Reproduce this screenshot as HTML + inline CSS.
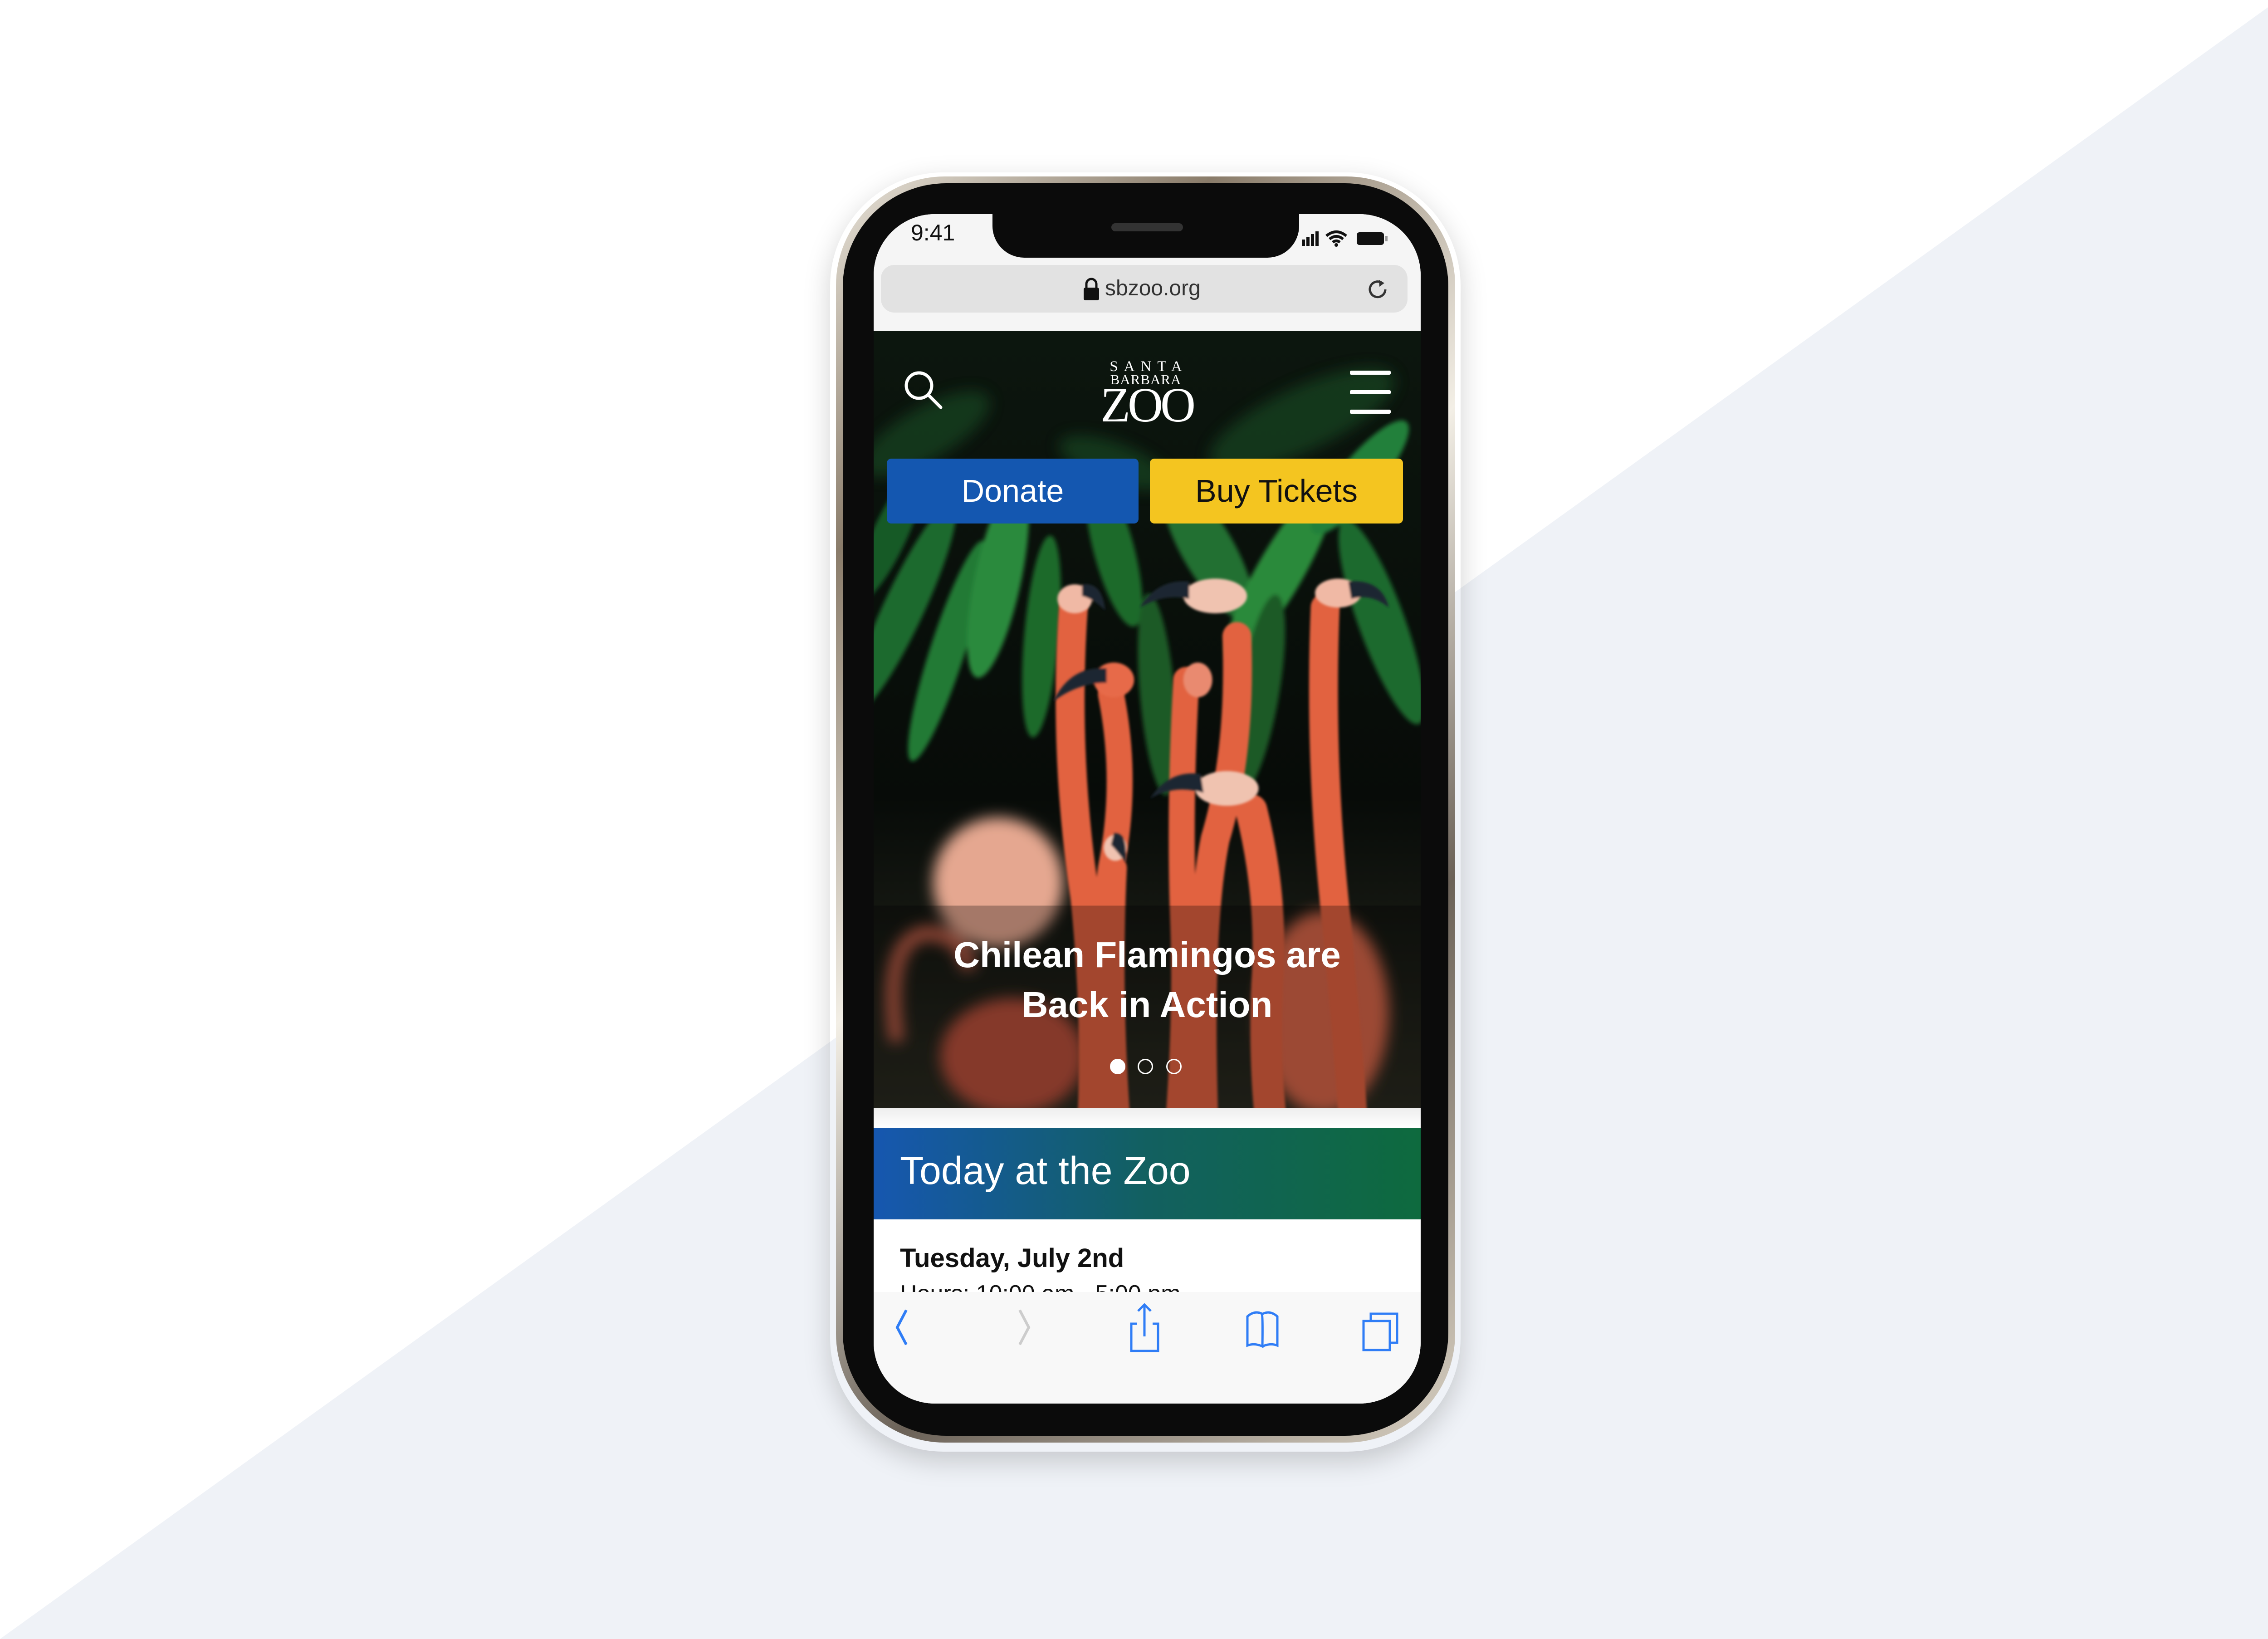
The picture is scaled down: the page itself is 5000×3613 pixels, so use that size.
<!DOCTYPE html>
<html><head><meta charset="utf-8">
<style>
html,body{margin:0;padding:0}
body{width:5000px;height:3613px;position:relative;overflow:hidden;background:#fff;font-family:"Liberation Sans",sans-serif}
.a{position:absolute}
</style></head><body>
<svg class="a" style="left:0;top:0" width="5000" height="3613"><polygon points="5000,16 0,3613 5000,3613" fill="#eff2f7"/></svg>

<!-- phone -->
<div class="a" style="left:1830px;top:380px;width:1390px;height:2820px;border-radius:250px;box-shadow:0 20px 60px rgba(0,0,0,0.18)"></div>
<div class="a" style="left:1843px;top:389px;width:1365px;height:2791px;border-radius:240px;background:linear-gradient(135deg,#e9e4da,#8a7c6a 20%,#f3efe6 45%,#6b6258 70%,#d8d0c2);"></div>
<div class="a" style="left:1858px;top:404px;width:1335px;height:2761px;border-radius:228px;background:#0b0b0b"></div>
<div class="a" style="left:1926px;top:472px;width:1206px;height:2622px;border-radius:135px;background:#f6f6f6;overflow:hidden">
  <!-- status -->
  <div class="a" style="left:0;top:0;width:1206px;height:258px;background:#f5f5f5"></div>
  <div class="a" style="left:82px;top:12px;font-size:50px;color:#111">9:41</div>
  <div class="a" style="left:262px;top:0;width:676px;height:96px;background:#0b0b0b;border-radius:0 0 70px 70px"></div>
  <div class="a" style="left:524px;top:20px;width:158px;height:18px;background:#333;border-radius:9px"></div>
  <svg class="a" style="left:940px;top:30px" width="240" height="50">
    <rect x="4" y="26" width="7" height="14" fill="#111"/><rect x="14" y="20" width="7" height="20" fill="#111"/><rect x="24" y="14" width="7" height="26" fill="#111"/><rect x="34" y="8" width="7" height="32" fill="#111"/>
    <path d="M58 18 Q80 0 102 18 M65 25 Q80 13 95 25 M72 32 Q80 26 88 32" stroke="#111" stroke-width="6" fill="none"/><circle cx="80" cy="38" r="4" fill="#111"/>
    <rect x="125" y="10" width="60" height="28" rx="6" fill="#111"/><rect x="188" y="18" width="5" height="12" fill="#999"/>
  </svg>
  <!-- address bar -->
  <div class="a" style="left:16px;top:112px;width:1161px;height:105px;border-radius:30px;background:#e2e2e2"></div>
  <svg class="a" style="left:460px;top:140px" width="40" height="55"><path d="M9 22 V14 a11 11 0 0 1 22 0 V22" stroke="#111" stroke-width="5" fill="none"/><rect x="3" y="22" width="34" height="28" rx="4" fill="#111"/></svg>
  <div class="a" style="left:510px;top:136px;font-size:48px;color:#333">sbzoo.org</div>
  <svg class="a" style="left:1088px;top:142px" width="50" height="50"><path d="M33 10 A17 17 0 1 0 40 24" stroke="#333" stroke-width="5" fill="none"/><path d="M26 3 L38 10 L27 18 Z" fill="#333"/></svg>

  <!-- hero -->
  <svg class="a" style="left:0;top:258px" width="1206" height="1713" viewBox="604 229 378 537" preserveAspectRatio="none">
    <defs>
      <linearGradient id="bg" x1="0" y1="0" x2="0" y2="1"><stop offset="0" stop-color="#0c160e"/><stop offset="0.6" stop-color="#070b08"/><stop offset="1" stop-color="#2a2a20"/></linearGradient>
      <filter id="bl"><feGaussianBlur stdDeviation="5"/></filter>
      <filter id="bl2"><feGaussianBlur stdDeviation="1.5"/></filter>
      <filter id="bl3"><feGaussianBlur stdDeviation="0.8"/></filter>
    </defs>
    <rect x="604" y="229" width="378" height="537" fill="url(#bg)"/>
    <g fill="#1f5a2a" opacity="0.5" filter="url(#bl)">
      <ellipse cx="640" cy="300" rx="50" ry="18" transform="rotate(-30 640 300)"/>
      <ellipse cx="900" cy="290" rx="70" ry="22" transform="rotate(-25 900 290)"/>
      <ellipse cx="770" cy="320" rx="40" ry="14" transform="rotate(20 770 320)"/>
    </g>
    <g filter="url(#bl2)">
      <ellipse cx="625" cy="420" rx="14" ry="80" fill="#1e6a2e" transform="rotate(25 625 420)"/>
      <ellipse cx="655" cy="450" rx="12" ry="80" fill="#247a35" transform="rotate(18 655 450)"/>
      <ellipse cx="690" cy="400" rx="16" ry="70" fill="#2b8a3c" transform="rotate(12 690 400)"/>
      <ellipse cx="720" cy="440" rx="12" ry="70" fill="#1c6a2c" transform="rotate(5 720 440)"/>
      <ellipse cx="770" cy="380" rx="14" ry="55" fill="#1c6a2c" transform="rotate(-15 770 380)"/>
      <ellipse cx="800" cy="480" rx="12" ry="70" fill="#1a5a28" transform="rotate(-5 800 480)"/>
      <ellipse cx="835" cy="380" rx="18" ry="55" fill="#236f31" transform="rotate(-30 835 380)"/>
      <ellipse cx="885" cy="395" rx="16" ry="70" fill="#2a8a3b" transform="rotate(30 885 395)"/>
      <ellipse cx="955" cy="430" rx="16" ry="75" fill="#1e6a2e" transform="rotate(-20 955 430)"/>
      <ellipse cx="870" cy="480" rx="14" ry="70" fill="#1a5a28" transform="rotate(10 870 480)"/>
      <ellipse cx="615" cy="370" rx="12" ry="50" fill="#165a25" transform="rotate(25 615 370)"/>
      <ellipse cx="940" cy="330" rx="14" ry="50" fill="#24803a" transform="rotate(40 940 330)"/>
    </g>
    <g filter="url(#bl)">
      <ellipse cx="690" cy="610" rx="45" ry="45" fill="#e5a790"/>
      <path d="M620 720 Q610 650 640 645 Q665 645 670 670" fill="none" stroke="#c8604a" stroke-width="10"/>
      <ellipse cx="915" cy="700" rx="45" ry="70" fill="#d8664a"/>
      <ellipse cx="700" cy="730" rx="50" ry="40" fill="#b9503a"/>
    </g>
    <g stroke="#e2623f" fill="none" stroke-linecap="round" filter="url(#bl3)">
      <path d="M742 420 Q735 520 750 620 Q758 700 755 770" stroke-width="20"/>
      <path d="M768 480 Q780 540 768 600 Q760 660 762 770" stroke-width="18"/>
      <path d="M855 440 Q858 520 840 580 Q828 640 832 770" stroke-width="20"/>
      <path d="M820 470 Q815 560 818 640 Q820 700 815 770" stroke-width="18"/>
      <path d="M916 420 Q912 520 922 620 Q930 700 935 770" stroke-width="20"/>
      <path d="M865 560 Q880 620 876 680 Q874 730 878 770" stroke-width="22"/>
      <path d="M770 600 Q766 680 772 770" stroke-width="18"/>
    </g>
    <g filter="url(#bl3)">
      <ellipse cx="743" cy="414" rx="12" ry="10" fill="#f0b9a5"/><path d="M748 404 Q762 402 764 422 Q756 414 748 412Z" fill="#1b2530"/>
      <ellipse cx="770" cy="470" rx="14" ry="12" fill="#e76b48"/><path d="M765 462 Q740 460 728 485 Q745 472 765 472Z" fill="#1b2530"/>
      <ellipse cx="840" cy="412" rx="22" ry="12" fill="#f0c3b0"/><path d="M822 402 Q800 400 788 420 Q805 410 822 414Z" fill="#1b2530"/>
      <ellipse cx="828" cy="470" rx="10" ry="12" fill="#e98a70"/>
      <ellipse cx="925" cy="410" rx="16" ry="10" fill="#f0b9a5"/><path d="M932 402 Q955 400 960 420 Q948 410 934 414Z" fill="#1b2530"/>
      <ellipse cx="848" cy="545" rx="22" ry="12" fill="#f0c3b0"/><path d="M830 535 Q808 532 795 552 Q812 542 832 548Z" fill="#1b2530"/>
      <ellipse cx="771" cy="586" rx="8" ry="9" fill="#f0c3b0"/><path d="M770 576 Q780 575 778 596 Q772 588 768 584Z" fill="#1b2530"/>
    </g>
    <rect x="604" y="626" width="378" height="140" fill="rgba(0,0,0,0.28)"/>
  </svg>
  <!-- header icons -->
  <svg class="a" style="left:60px;top:338px" width="110" height="110"><circle cx="40" cy="40" r="28" stroke="#fff" stroke-width="7" fill="none"/><path d="M61 61 L88 88" stroke="#fff" stroke-width="7" stroke-linecap="round"/></svg>
  <div class="a" style="left:500px;top:320px;width:200px;text-align:center;color:#fff;font-family:'Liberation Serif',serif;line-height:1">
    <div style="font-size:33px;letter-spacing:13px;margin-left:13px">SANTA</div>
    <div style="font-size:31px;letter-spacing:1px;margin-top:-4px">BARBARA</div>
    <div style="font-size:108px;margin-top:-12px;letter-spacing:-6px">ZOO</div>
  </div>
  <div class="a" style="left:1050px;top:345px;width:90px;height:9px;background:#fff;border-radius:3px"></div>
  <div class="a" style="left:1050px;top:388px;width:90px;height:9px;background:#fff;border-radius:3px"></div>
  <div class="a" style="left:1050px;top:431px;width:90px;height:9px;background:#fff;border-radius:3px"></div>
  <!-- buttons -->
  <div class="a" style="left:29px;top:539px;width:555px;height:143px;border-radius:10px;background:#1457b0;color:#fff;font-size:70px;line-height:143px;text-align:center">Donate</div>
  <div class="a" style="left:609px;top:539px;width:558px;height:143px;border-radius:10px;background:#f4c520;color:#111;font-size:70px;line-height:143px;text-align:center">Buy Tickets</div>
  <!-- caption -->
  <div class="a" style="left:0;top:1578px;width:1206px;text-align:center;color:#fff;font-size:80px;font-weight:bold;line-height:110px">Chilean Flamingos are<br>Back in Action</div>
  <div class="a" style="left:521px;top:1862px;width:34px;height:34px;border-radius:50%;background:#fff"></div>
  <div class="a" style="left:582px;top:1862px;width:28px;height:28px;border-radius:50%;border:3px solid #fff"></div>
  <div class="a" style="left:645px;top:1862px;width:28px;height:28px;border-radius:50%;border:3px solid #fff"></div>
  <!-- below hero -->
  <div class="a" style="left:0;top:1971px;width:1206px;height:44px;background:linear-gradient(#eeeeee,#fff)"></div>
  <div class="a" style="left:0;top:2015px;width:1206px;height:201px;background:linear-gradient(90deg,#1657b0,#126060 50%,#0e6a3e)"></div>
  <div class="a" style="left:58px;top:2060px;font-size:86px;color:#fff">Today at the Zoo</div>
  <div class="a" style="left:0;top:2216px;width:1206px;height:160px;background:#fff"></div>
  <div class="a" style="left:58px;top:2268px;font-size:58px;font-weight:bold;color:#111">Tuesday, July 2nd</div>
  <div class="a" style="left:58px;top:2350px;font-size:52px;color:#111">Hours: 10:00 am - 5:00 pm</div>
  <!-- toolbar -->
  <div class="a" style="left:0;top:2376px;width:1206px;height:246px;background:#f8f8f8"></div>
  <svg class="a" style="left:0;top:2376px" width="1206" height="200">
    <path d="M72 40 L52 78 L72 116" stroke="#2f7df6" stroke-width="6" fill="none"/>
    <path d="M322 40 L342 78 L322 116" stroke="#ccc" stroke-width="6" fill="none"/>
    <path d="M580 70 H568 V130 H627 V70 H615 M597 98 V28 M583 42 L597 28 L611 42" stroke="#2f7df6" stroke-width="5" fill="none"/>
    <path d="M824 118 V54 Q840 40 856 48 Q858 54 857 120 Q840 112 824 118 Z M857 120 Q874 112 890 118 V54 Q874 40 858 48" stroke="#2f7df6" stroke-width="5" fill="none"/>
    <rect x="1080" y="64" width="58" height="64" stroke="#2f7df6" stroke-width="5" fill="none"/>
    <path d="M1096 64 V48 H1154 V112 H1138" stroke="#2f7df6" stroke-width="5" fill="none"/>
  </svg>
</div>
</body></html>
